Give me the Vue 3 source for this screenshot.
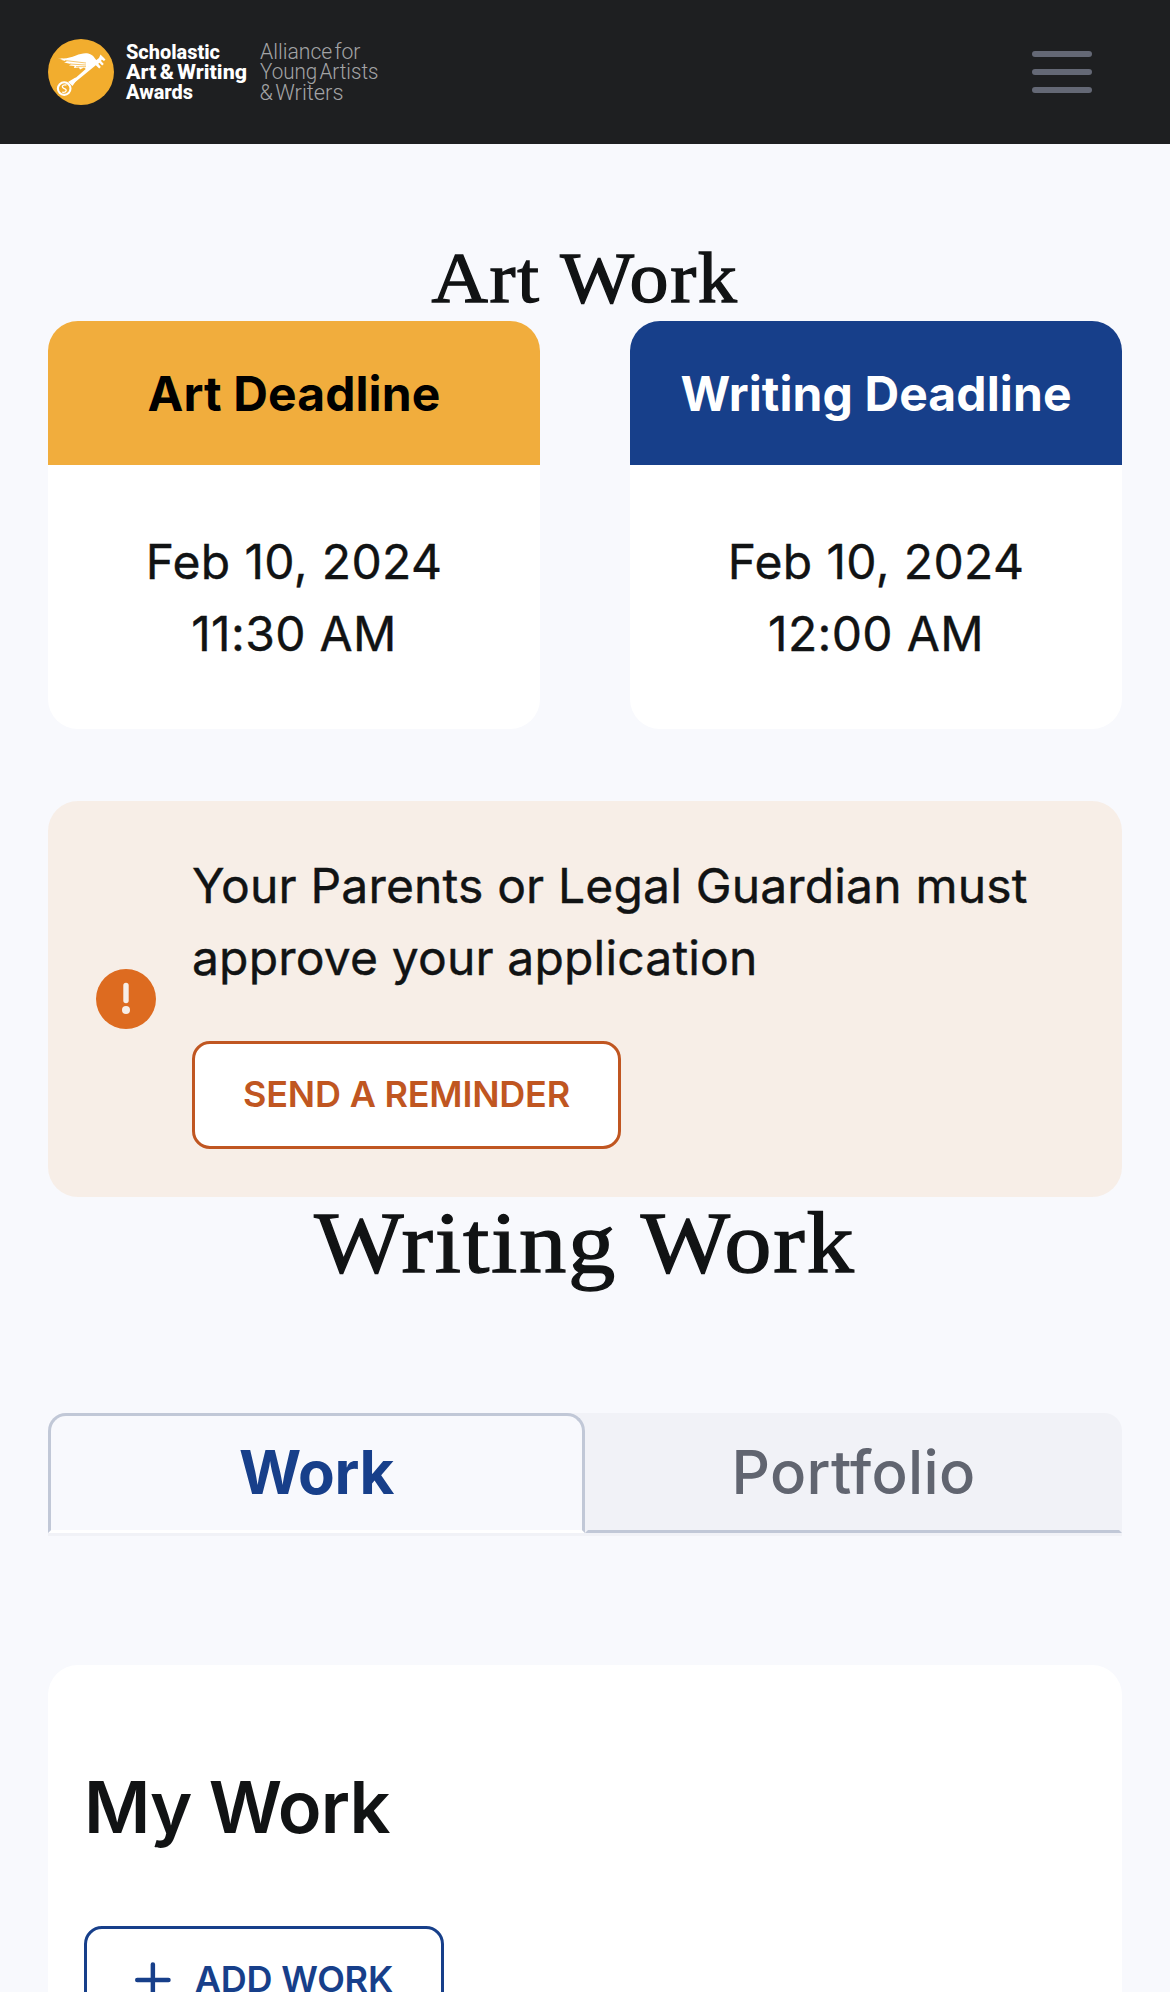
<script setup>
const deadlines = [
  { title: 'Art Deadline', kind: 'art', date: 'Feb 10, 2024', time: '11:30 AM' },
  { title: 'Writing Deadline', kind: 'writing', date: 'Feb 10, 2024', time: '12:00 AM' },
]
</script>

<template>
  <div class="page">
    <header class="topbar">
      <svg class="logo" width="340" height="72" viewBox="0 0 340 72">
        <circle cx="33" cy="36" r="33" fill="#f2ad2e" />
        <g fill="#fff">
          <path d="M8 21.5C17 23.5 21 22 28 19.5C35 16.500 43 15.500 47 22.500L49 25L45 31L41 30.500L39 34L36 31.500L32 33.500L31 31.500L26 32L26.500 30L21 29.500L23 28L16 26.500L19 25.500L12 23.500L15 23.200Z" />
          <path d="M44.500 27L51 22L52.500 18.500L55 21L57.500 23.500L56 25L53.800 23.400L53 25L55.800 28L54.200 29.400L51.400 26.800L50.300 27.800L52.800 31L51.200 32.600L47.800 29.200L25.500 47.500L23.500 45.500Z" />
          <path d="M20 46L27.500 41.500L29 43.500L24.500 50Z" />
        </g>
        <path d="M17 24.500L38 27M22 28L38 29M28 30.600L38 30.700" stroke="#f2ad2e" stroke-width=".7" />
        <circle cx="16.200" cy="52.600" r="6.300" fill="#f2ad2e" stroke="#fff" stroke-width="2.100" />
        <path d="M18.500 49C14 48 13 51.500 16.300 52.600C19.500 53.600 18.500 57 14.200 56.200" fill="none" stroke="#fff" stroke-width="1.300" />
        <g class="brand">
          <text x="78" y="22.500" textLength="94" lengthAdjust="spacingAndGlyphs">Scholastic</text>
          <text x="78" y="42.700" textLength="121" lengthAdjust="spacingAndGlyphs">Art &amp; Writing</text>
          <text x="78" y="63" textLength="67" lengthAdjust="spacingAndGlyphs">Awards</text>
        </g>
        <g class="alliance">
          <text x="212" y="22.700" textLength="100.500" lengthAdjust="spacingAndGlyphs">Alliance for</text>
          <text x="212" y="43" textLength="118.500" lengthAdjust="spacingAndGlyphs">Young Artists</text>
          <text x="211.500" y="63.500" textLength="84" lengthAdjust="spacingAndGlyphs">&amp; Writers</text>
        </g>
      </svg>
      <button class="menu" aria-label="Menu"><span /><span /><span /></button>
    </header>

    <main>
      <h1 class="art-title">Art Work</h1>

      <section class="deadlines">
        <article v-for="d in deadlines" :key="d.title" class="deadline">
          <h2 :class="d.kind">{{ d.title }}</h2>
          <p>{{ d.date }}<br />{{ d.time }}</p>
        </article>
      </section>

      <section class="alert">
        <svg class="alert-icon" width="60" height="60" viewBox="0 0 60 60">
          <circle cx="30" cy="30" r="30" fill="#dd6b20" />
          <path d="M30 16.500V31.500" stroke="#f7eee7" stroke-width="5.400" stroke-linecap="round" />
          <circle cx="30" cy="41" r="4" fill="#f7eee7" />
        </svg>
        <div class="alert-body">
          <p>Your Parents or Legal Guardian must approve your application</p>
          <button class="btn remind">SEND A REMINDER</button>
        </div>
      </section>

      <h1 class="writing-title">Writing Work</h1>

      <nav class="tabs">
        <button class="tab active">Work</button>
        <button class="tab">Portfolio</button>
      </nav>

      <section class="card">
        <h2>My Work</h2>
        <button class="btn add">
          <svg width="36" height="36" viewBox="0 0 36 36">
            <path d="M2.250 18H33.750M18 2.250V33.750" stroke="#173f8a" stroke-width="4.500" stroke-linecap="round" />
          </svg>
          <span>ADD WORK</span>
        </button>
      </section>
    </main>
  </div>
</template>

<style>
body {
  margin: 0;
  background: #f8f9fd;
}
</style>

<style scoped>
.page {
  height: 100vh;
  overflow: hidden;
  background: #f8f9fd;
  color: #111314;
  font-family: Inter, 'Liberation Sans', sans-serif;
}
h1, h2, p {
  margin: 0;
}
button {
  box-sizing: border-box;
  font-family: inherit;
}
.topbar {
  box-sizing: border-box;
  height: 144px;
  padding: 0 78px 0 48px;
  background: #1e1f21;
  display: flex;
  align-items: center;
  justify-content: space-between;
}
.brand {
  font: 800 21px Roboto, sans-serif;
  fill: #fff;
  word-spacing: -2px;
}
.alliance {
  font: 300 21.500px Roboto, sans-serif;
  fill: #a3a4a6;
  word-spacing: -3px;
}
.menu {
  width: 60px;
  padding: 0;
  border: 0;
  background: none;
  display: flex;
  flex-direction: column;
  gap: 12px;
}
.menu span {
  height: 6px;
  border-radius: 3px;
  background: #646875;
}
main {
  padding: 92px 48px 0;
}
h1 {
  font-family: 'Liberation Serif', serif;
  font-weight: 400;
  text-align: center;
  transform: scaleX(1.1);
  -webkit-text-stroke: 1.3px #111314;
}
.art-title {
  font-size: 71px;
  line-height: 85px;
  letter-spacing: 1.5px;
}
.writing-title {
  font-size: 86px;
  line-height: 92px;
  letter-spacing: 1.6px;
}
.deadlines {
  display: grid;
  grid-template-columns: 1fr 1fr;
  gap: 90px;
}
.deadline {
  border-radius: 30px;
  overflow: hidden;
  background: #fff;
  text-align: center;
  font-size: 48px;
  line-height: 72px;
}
.deadline h2 {
  padding: 37px 0 35px;
  font-size: 48px;
  font-weight: 700;
  letter-spacing: 0.1px;
}
.deadline h2.art {
  background: #f1ad3d;
  color: #000;
}
.deadline h2.writing {
  background: #173f8a;
  color: #fff;
}
.deadline p {
  padding: 61px 0 59px;
  letter-spacing: 0.35px;
  -webkit-text-stroke: 0.4px #111314;
}
.alert {
  margin-top: 72px;
  padding: 48px;
  border-radius: 30px;
  background: #f7eee7;
  display: flex;
  align-items: center;
  gap: 36px;
}
.alert-icon {
  flex: none;
}
.alert-body {
  flex: 1;
  font-size: 48px;
  line-height: 72px;
}
.alert-body p {
  padding-top: 1px;
  letter-spacing: 0.17px;
  -webkit-text-stroke: 0.4px #111314;
}
.btn {
  height: 108px;
  padding: 0 48px 2px;
  border: 3px solid currentColor;
  border-radius: 18px;
  background: #fff;
  display: flex;
  align-items: center;
  justify-content: center;
  gap: 24px;
  font-size: 36px;
  font-weight: 600;
  letter-spacing: -0.2px;
  white-space: nowrap;
}
.remind {
  width: 429px;
  margin-top: 47px;
  color: #c05621;
}
.tabs {
  margin-top: 124px;
  padding-bottom: 3px;
  border-radius: 18px 18px 0 0;
  background: #f1f2f7;
  display: flex;
}
.tab {
  flex: 1;
  height: 120px;
  padding: 0 0 2px;
  border: 3px solid transparent;
  border-bottom-color: #c1c8d7;
  border-radius: 18px 18px 0 0;
  background: none;
  color: #616570;
  font-size: 60px;
  font-weight: 500;
  letter-spacing: 0.3px;
}
.tab.active {
  border-color: #c1c8d7 #c1c8d7 #fff;
  background: #f8f9fd;
  color: #173f8a;
  font-weight: 650;
  letter-spacing: -0.3px;
}
.card {
  margin-top: 129px;
  padding: 88px 36px;
  border-radius: 30px;
  background: #fff;
}
.card h2 {
  font-size: 72px;
  line-height: 108px;
  font-weight: 600;
  letter-spacing: -0.9px;
}
.add {
  width: 360px;
  margin-top: 65px;
  padding-bottom: 0;
  color: #173f8a;
}
.add span {
  padding-bottom: 2px;
}
</style>
